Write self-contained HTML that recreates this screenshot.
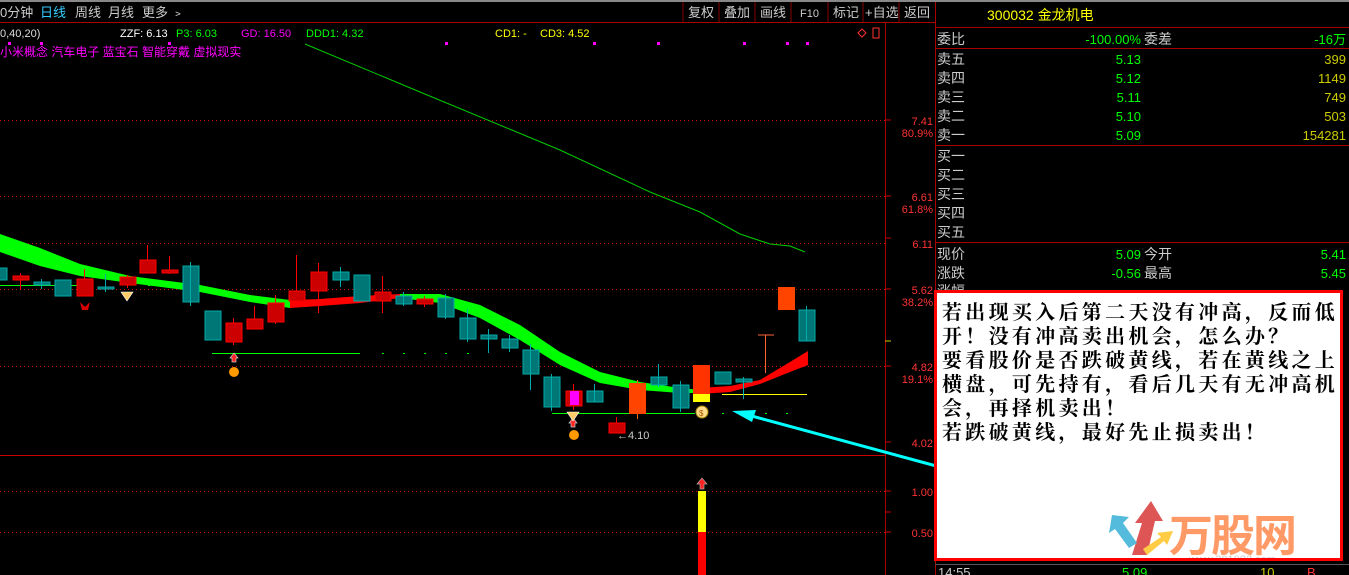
<!DOCTYPE html>
<html><head><meta charset="utf-8"><style>
html,body{margin:0;padding:0;background:#000;width:1349px;height:575px;overflow:hidden;font-family:"Liberation Sans","Noto Sans CJK SC",sans-serif}
svg{position:absolute;left:0;top:0}
text{font-family:"Liberation Sans","Noto Sans CJK SC",sans-serif}
.box{position:absolute;left:934px;top:290px;width:403px;height:265px;background:#fff;border:3px solid #f00;overflow:hidden}
.box p{margin:0;padding:6px 0 0 5px;font-family:"Noto Serif CJK SC","WenQuanYi Zen Hei",serif;font-weight:bold;font-size:20px;line-height:24px;letter-spacing:3.3px;color:#000;white-space:nowrap}
</style></head><body>
<svg width="1349" height="575" viewBox="0 0 1349 575">
<rect x="0" y="0" width="1349" height="2" fill="#888"/>
<line x1="0" y1="22.5" x2="935" y2="22.5" stroke="#a00"/>
<g font-size="13" fill="#ccc">
<text x="0" y="17">0分钟</text><text x="40" y="17" fill="#3cf">日线</text><text x="75" y="17">周线</text><text x="108" y="17">月线</text><text x="142" y="17">更多 ﹥</text>
</g>
<g stroke="#800"><line x1="683" y1="2" x2="683" y2="22"/><line x1="719" y1="2" x2="719" y2="22"/><line x1="755" y1="2" x2="755" y2="22"/><line x1="791" y1="2" x2="791" y2="22"/><line x1="828" y1="2" x2="828" y2="22"/><line x1="863" y1="2" x2="863" y2="22"/><line x1="899" y1="2" x2="899" y2="22"/></g>
<g font-size="13" fill="#ccc"><text x="688" y="17">复权</text><text x="724" y="17">叠加</text><text x="760" y="17">画线</text><text x="800" y="17" font-size="11">F10</text><text x="833" y="17">标记</text><text x="865" y="17">+自选</text><text x="904" y="17">返回</text></g>
<g font-size="11"><text x="0" y="37" fill="#ddd">0,40,20)</text><text x="120" y="37" fill="#fff">ZZF: 6.13</text><text x="176" y="37" fill="#0f0">P3: 6.03</text><text x="241" y="37" fill="#f0f">GD: 16.50</text><text x="306" y="37" fill="#0f0">DDD1: 4.32</text><text x="495" y="37" fill="#ff0">CD1: -</text><text x="540" y="37" fill="#ff0">CD3: 4.52</text></g>
<text x="0" y="56" font-size="12" fill="#f0f">小米概念 汽车电子 蓝宝石 智能穿戴 虚拟现实</text>
<g fill="#f0f"><rect x="8" y="42" width="3" height="3"/><rect x="40" y="42" width="3" height="3"/><rect x="168" y="42" width="3" height="3"/><rect x="445" y="42" width="3" height="3"/><rect x="593" y="42" width="3" height="3"/><rect x="657" y="42" width="3" height="3"/><rect x="743" y="42" width="3" height="3"/><rect x="786" y="42" width="3" height="3"/><rect x="806" y="42" width="3" height="3"/></g>
<path d="M862 29 l4 4 -4 4 -4 -4z" fill="none" stroke="#f33"/><rect x="873" y="28" width="6" height="10" fill="none" stroke="#f33"/>
<line x1="885.5" y1="22" x2="885.5" y2="575" stroke="#a00"/>
<line x1="0" y1="455.5" x2="885" y2="455.5" stroke="#c00"/>
<g stroke="#c00" stroke-dasharray="1,3">
<line x1="0" y1="120.5" x2="885" y2="120.5"/><line x1="0" y1="196.5" x2="885" y2="196.5"/><line x1="0" y1="243.5" x2="885" y2="243.5"/><line x1="0" y1="289.5" x2="885" y2="289.5"/><line x1="0" y1="366.5" x2="885" y2="366.5"/><line x1="0" y1="491.5" x2="885" y2="491.5"/><line x1="0" y1="532.5" x2="885" y2="532.5"/>
</g>
<g stroke="#c00"><line x1="885" y1="120" x2="891" y2="120"/><line x1="885" y1="196" x2="891" y2="196"/><line x1="885" y1="238" x2="891" y2="238"/><line x1="885" y1="289" x2="891" y2="289"/><line x1="885" y1="341" x2="891" y2="341" stroke="#cc0"/><line x1="885" y1="366" x2="891" y2="366"/><line x1="885" y1="442" x2="891" y2="442"/><line x1="885" y1="491" x2="891" y2="491"/><line x1="885" y1="512" x2="891" y2="512"/><line x1="885" y1="532" x2="891" y2="532"/></g>
<g font-size="11" fill="#f33" text-anchor="end">
<text x="933" y="125">7.41</text><text x="933" y="137">80.9%</text><text x="933" y="201">6.61</text><text x="933" y="213">61.8%</text><text x="933" y="248">6.11</text><text x="933" y="294">5.62</text><text x="933" y="306">38.2%</text><text x="933" y="371">4.82</text><text x="933" y="383">19.1%</text><text x="933" y="447">4.02</text><text x="933" y="496">1.00</text><text x="933" y="537">0.50</text>
</g>
<path d="M305 44 L420 92 L560 150 L650 192 L700 212 L740 234 L770 244 L790 246 L805 252" fill="none" stroke="#0c0" stroke-width="1"/>
<path d="M0 252 L40 266 L80 276 L130 283 L200 292 L250 302 L290 308 L290 300 L250 295 L200 285 L130 276 L80 264 L40 248 L0 234Z" fill="#0f0"/>
<path d="M290 300 L320 299 L360 296 L400 294 L400 298 L360 303 L320 306 L290 308Z" fill="#f00"/>
<path d="M400 294 L440 294 L480 305 L520 325 L560 352 L600 372 L640 382 L640 390 L600 383 L560 365 L520 340 L480 318 L440 303 L400 298Z" fill="#0f0"/>
<path d="M640 382 L680 388 L700 390 L700 393 L680 393 L640 390Z" fill="#0f0"/>
<path d="M700 388 L730 386 L760 380 L790 362 L808 351 L808 365 L790 372 L760 384 L730 392 L700 394Z" fill="#f00"/>
<line x1="212" y1="353.5" x2="360" y2="353.5" stroke="#0f0"/>
<line x1="552" y1="413.5" x2="695" y2="413.5" stroke="#0f0"/>
<line x1="722" y1="394.5" x2="807" y2="394.5" stroke="#ff0"/>
<g fill="#0f0"><rect x="382" y="353" width="2" height="1"/><rect x="403" y="353" width="2" height="1"/><rect x="424" y="353" width="2" height="1"/><rect x="445" y="353" width="2" height="1"/><rect x="467" y="353" width="2" height="1"/><rect x="722" y="413" width="2" height="1"/><rect x="765" y="413" width="2" height="1"/><rect x="786" y="413" width="2" height="1"/><rect x="148" y="285" width="2" height="1"/><rect x="170" y="285" width="2" height="1"/><rect x="190" y="285" width="2" height="1"/></g>
<line x1="0" y1="285.5" x2="84" y2="285.5" stroke="#0f0"/>
<g stroke-width="1">
<g stroke="#0aa" fill="#077">
<rect x="-2" y="268" width="9" height="12"/><rect x="34" y="282" width="16" height="3"/><rect x="55" y="280" width="16" height="16"/><rect x="98" y="287" width="16" height="2"/>
<rect x="183" y="266" width="16" height="36"/><rect x="205" y="311" width="16" height="29"/><rect x="333" y="272" width="16" height="8"/><rect x="354" y="275" width="16" height="26"/><rect x="396" y="296" width="16" height="8"/>
<rect x="438" y="298" width="16" height="19"/><rect x="460" y="318" width="16" height="21"/><rect x="481" y="335" width="16" height="4"/><rect x="502" y="339" width="16" height="9"/><rect x="523" y="350" width="16" height="24"/><rect x="544" y="377" width="16" height="30"/>
<rect x="587" y="391" width="16" height="11"/><rect x="651" y="377" width="16" height="8"/><rect x="673" y="385" width="16" height="23"/><rect x="715" y="372" width="16" height="12"/><rect x="736" y="379" width="16" height="3"/><rect x="799" y="310" width="16" height="31"/>
</g>
<g stroke="#0aa"><line x1="41.5" y1="279" x2="41.5" y2="289"/><line x1="105.5" y1="274" x2="105.5" y2="292"/><line x1="190.5" y1="262" x2="190.5" y2="306"/><line x1="340.5" y1="267" x2="340.5" y2="287"/><line x1="403.5" y1="292" x2="403.5" y2="306"/><line x1="445.5" y1="294" x2="445.5" y2="319"/><line x1="467.5" y1="309" x2="467.5" y2="342"/><line x1="488.5" y1="329" x2="488.5" y2="353"/><line x1="509.5" y1="335" x2="509.5" y2="352"/><line x1="530.5" y1="344" x2="530.5" y2="390"/><line x1="551.5" y1="374" x2="551.5" y2="411"/><line x1="594.5" y1="384" x2="594.5" y2="402"/><line x1="658.5" y1="364" x2="658.5" y2="387"/><line x1="680.5" y1="381" x2="680.5" y2="412"/><line x1="743.5" y1="377" x2="743.5" y2="399"/><line x1="806.5" y1="306" x2="806.5" y2="341"/></g>
<g stroke="#f00" fill="#c00">
<line x1="20.5" y1="273" x2="20.5" y2="290"/><rect x="13" y="276" width="16" height="4"/>
<line x1="84.5" y1="269" x2="84.5" y2="296"/><rect x="77" y="279" width="16" height="17"/>
<line x1="127.5" y1="275" x2="127.5" y2="288"/><rect x="120" y="277" width="16" height="8"/>
<line x1="147.5" y1="245" x2="147.5" y2="273"/><rect x="140" y="260" width="16" height="13"/>
<line x1="169.5" y1="256" x2="169.5" y2="274"/><rect x="162" y="270" width="16" height="3"/>
<line x1="233.5" y1="318" x2="233.5" y2="345"/><rect x="226" y="323" width="16" height="19"/>
<line x1="254.5" y1="306" x2="254.5" y2="329"/><rect x="247" y="319" width="16" height="10"/>
<line x1="275.5" y1="295" x2="275.5" y2="324"/><rect x="268" y="303" width="16" height="19"/>
<line x1="296.5" y1="255" x2="296.5" y2="301"/><rect x="289" y="291" width="16" height="10"/>
<line x1="318.5" y1="263" x2="318.5" y2="313"/><rect x="311" y="272" width="16" height="19"/>
<line x1="382.5" y1="276" x2="382.5" y2="313"/><rect x="375" y="292" width="16" height="9"/>
<line x1="424.5" y1="296" x2="424.5" y2="307"/><rect x="417" y="299" width="16" height="5"/>
<line x1="573.5" y1="384" x2="573.5" y2="410"/><rect x="566" y="391" width="16" height="15"/>
<line x1="616.5" y1="417" x2="616.5" y2="433"/><rect x="609" y="423" width="16" height="10"/>
</g>
<rect x="570" y="391" width="9" height="14" fill="#f0f"/>
<line x1="637.5" y1="380" x2="637.5" y2="419" stroke="#f60"/><rect x="629" y="383" width="17" height="31" fill="#f40"/>
<rect x="693" y="365" width="17" height="29" fill="#f30"/><rect x="693" y="394" width="17" height="8" fill="#ff0"/>
<line x1="765.5" y1="335" x2="765.5" y2="373" stroke="#f63"/><line x1="758" y1="335" x2="774" y2="335" stroke="#f63"/>
<rect x="778" y="287" width="17" height="23" fill="#f40"/>
</g>
<path d="M230 358 l4 -5 4 5 h-2 v4 h-4 v-4z" fill="#f22" stroke="#ccc" stroke-width="0.7"/><circle cx="234" cy="372" r="5" fill="#f90"/>
<path d="M569 423 l4 -5 4 5 h-2 v4 h-4 v-4z" fill="#f22" stroke="#ccc" stroke-width="0.7"/><circle cx="574" cy="435" r="5" fill="#f90"/>
<path d="M121 292 h12 l-6 9z" fill="#fc6" stroke="#fff" stroke-width="0.6"/><path d="M567 412 h12 l-6 9z" fill="#fc6" stroke="#fff" stroke-width="0.6"/>
<path d="M80 302 l5 5 l5 -5 l-2 8 h-6z" fill="#d00"/>
<circle cx="702" cy="412" r="6" fill="#fd8" stroke="#a80"/><text x="699" y="416" font-size="8" fill="#a50">$</text>
<text x="617" y="439" font-size="11" fill="#ccc">←4.10</text>
<line x1="940" y1="467" x2="748" y2="415" stroke="#0ff" stroke-width="3"/><path d="M732 411 L756 410 L752 422Z" fill="#0ff"/>
<rect x="698" y="491" width="8" height="41" fill="#ff0"/><rect x="698" y="532" width="8" height="43" fill="#f00"/>
<path d="M697 484 l5 -6 5 6 h-3 v5 h-4 v-5z" fill="#f22" stroke="#aaa" stroke-width="0.7"/>
<line x1="935.5" y1="2" x2="935.5" y2="575" stroke="#a00"/>
<g stroke="#a00"><line x1="935" y1="27.5" x2="1349" y2="27.5"/><line x1="935" y1="48.5" x2="1349" y2="48.5"/><line x1="935" y1="145.5" x2="1349" y2="145.5"/><line x1="935" y1="242.5" x2="1349" y2="242.5"/></g>
<text x="987" y="20" font-size="14" fill="#ff0">300032 金龙机电</text>
<g font-size="14" fill="#ccc"><text x="937" y="44">委比</text><text x="1144" y="44">委差</text>
<text x="937" y="64">卖五</text><text x="937" y="83">卖四</text><text x="937" y="102">卖三</text><text x="937" y="121">卖二</text><text x="937" y="140">卖一</text>
<text x="937" y="161">买一</text><text x="937" y="180">买二</text><text x="937" y="199">买三</text><text x="937" y="218">买四</text><text x="937" y="237">买五</text>
<text x="937" y="259">现价</text><text x="1144" y="259">今开</text><text x="937" y="278">涨跌</text><text x="1144" y="278">最高</text></g>
<g font-size="13" fill="#0f0" text-anchor="end"><text x="1141" y="44">-100.00%</text><text x="1346" y="44">-16万</text>
<text x="1141" y="64">5.13</text><text x="1141" y="83">5.12</text><text x="1141" y="102">5.11</text><text x="1141" y="121">5.10</text><text x="1141" y="140">5.09</text>
<text x="1141" y="259">5.09</text><text x="1346" y="259">5.41</text><text x="1141" y="278">-0.56</text><text x="1346" y="278">5.45</text></g>
<g font-size="13" fill="#cc0" text-anchor="end"><text x="1346" y="64">399</text><text x="1346" y="83">1149</text><text x="1346" y="102">749</text><text x="1346" y="121">503</text><text x="1346" y="140">154281</text></g>
<text x="937" y="296" font-size="14" fill="#ccc">涨幅</text>
<line x1="935" y1="564.5" x2="1349" y2="564.5" stroke="#555"/>
<text x="938" y="577" font-size="13" fill="#ccc">14:55</text><text x="1122" y="577" font-size="13" fill="#0f0">5.09</text><text x="1260" y="577" font-size="13" fill="#cc0">10</text><text x="1307" y="577" font-size="13" fill="#f33">B</text>
</svg>
<div class="box"><p>若出现买入后第二天没有冲高，反而低<br>开！没有冲高卖出机会，怎么办？<br>要看股价是否跌破黄线，若在黄线之上<br>横盘，可先持有，看后几天有无冲高机<br>会，再择机卖出！<br>若跌破黄线，最好先止损卖出！</p>
<svg width="403" height="265" style="left:0;top:0">
<path d="M195 262 L205 230 L198 230 L214 208 L226 228 L218 228 L210 262Z" fill="#d55"/>
<path d="M192 255 L178 236 L172 240 L175 222 L192 224 L186 230 L200 250Z" fill="#5bd"/>
<path d="M206 256 L224 244 L220 240 L236 238 L230 252 L227 248 L210 262Z" fill="#fc4"/>
<text x="232" y="258" font-size="44" font-weight="bold" fill="#f96" font-family="'WenQuanYi Zen Hei',sans-serif" letter-spacing="-2">万股网</text>
<text x="252" y="270" font-size="11" fill="#ccc">www.201082.com</text>
</svg></div>
</body></html>
